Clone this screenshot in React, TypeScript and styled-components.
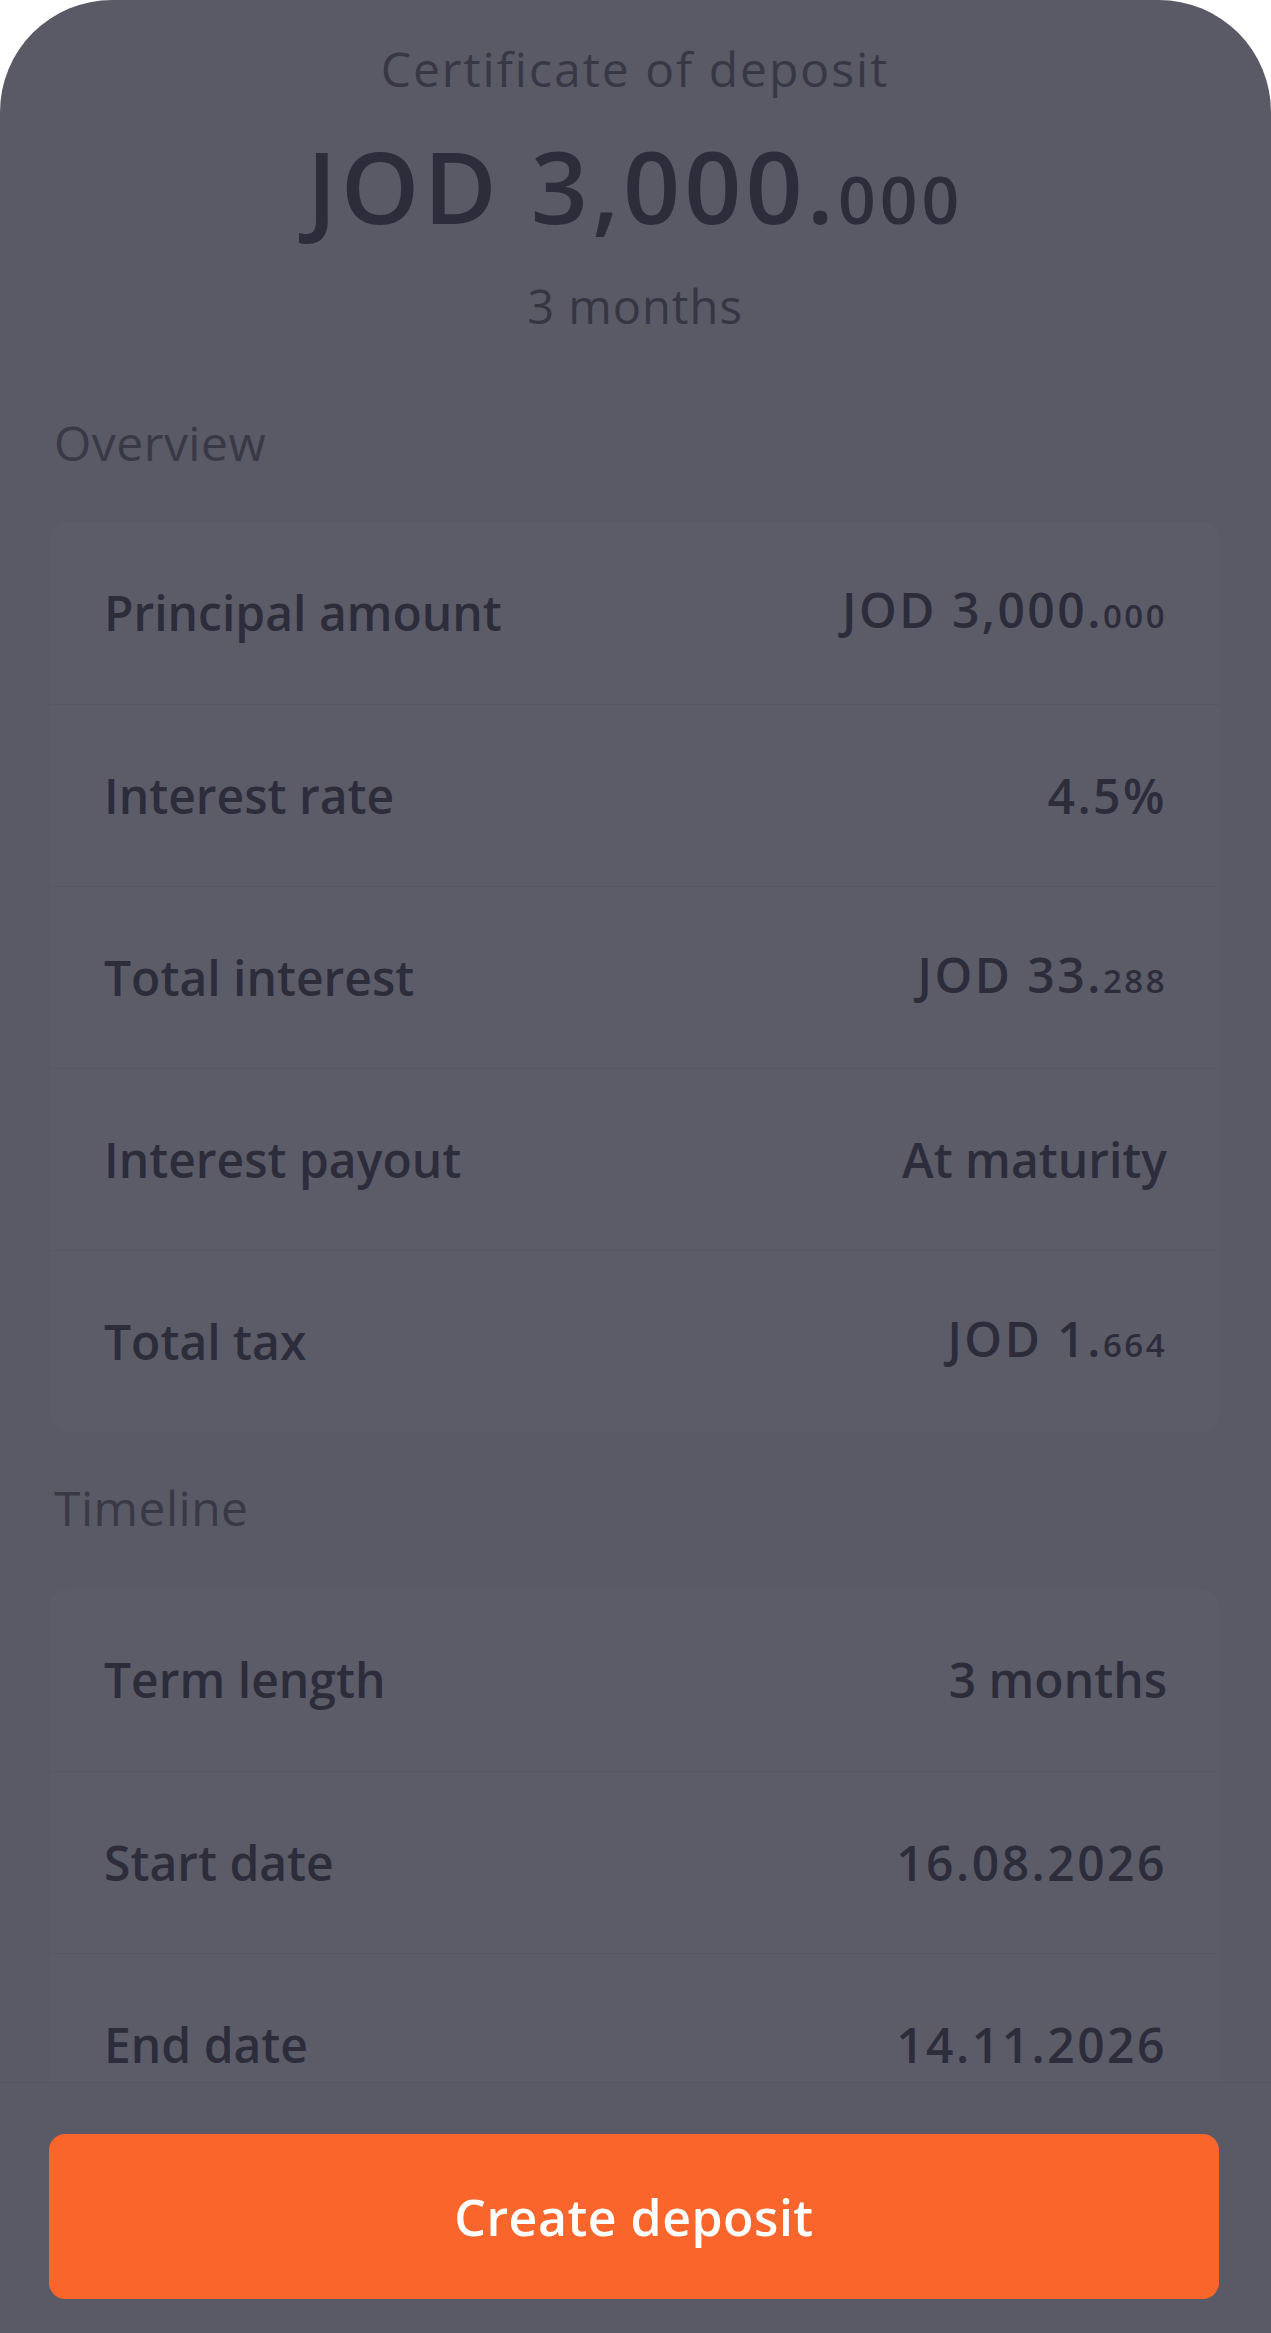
import React from "react";
import styled, { createGlobalStyle } from "styled-components";

const GlobalStyle = createGlobalStyle`
  html, body {
    margin: 0;
    padding: 0;
    background: #ffffff;
  }
  body {
    font-family: "Open Sans", "Noto Sans", sans-serif;
    -webkit-font-smoothing: antialiased;
  }
`;

interface Row {
  label: string;
  value: string;
  fraction?: string;
  numeric?: boolean;
}

const overview: Row[] = [
  { label: "Principal amount", value: "JOD 3,000.", fraction: "000", numeric: true },
  { label: "Interest rate", value: "4.5%", numeric: true },
  { label: "Total interest", value: "JOD 33.", fraction: "288", numeric: true },
  { label: "Interest payout", value: "At maturity" },
  { label: "Total tax", value: "JOD 1.", fraction: "664", numeric: true },
];

const timeline: Row[] = [
  { label: "Term length", value: "3 months" },
  { label: "Start date", value: "16.08.2026", numeric: true },
  { label: "End date", value: "14.11.2026", numeric: true },
];

const Sheet = styled.div`
  width: 1271px;
  height: 2333px;
  display: flex;
  flex-direction: column;
  background: #5a5a66;
  border-radius: 112px 112px 0 0;
  overflow: hidden;
`;

const ScrollArea = styled.main`
  flex: 1;
  overflow: hidden;
  padding: 39px 51px 0 50px;
`;

const Header = styled.header`
  display: flex;
  flex-direction: column;
  align-items: center;
  color: #2e2d3b;
`;

const Title = styled.div`
  font-size: 48px;
  line-height: 60px;
  letter-spacing: 2px;
  color: #383745;
`;

const Amount = styled.div`
  margin-top: 26px;
  font-size: 100px;
  line-height: 120px;
  font-weight: 600;
  letter-spacing: 4px;
  color: #2d2c3a;
`;

const Fraction = styled.span<{ $size: number }>`
  font-size: ${({ $size }) => $size}px;
`;

const Term = styled.div`
  margin-top: 18px;
  font-size: 47px;
  line-height: 60px;
  font-weight: 500;
  letter-spacing: 1px;
  color: #363543;
`;

const SectionLabel = styled.h2<{ $top: number }>`
  margin: ${({ $top }) => $top}px 0 0 4px;
  font-size: 48px;
  line-height: 60px;
  font-weight: 400;
  letter-spacing: 0.5px;
  color: #393846;
`;

const Card = styled.section<{ $top: number }>`
  margin-top: ${({ $top }) => $top}px;
  background: #5c5c69;
  border-radius: 18px;
`;

const RowItem = styled.div`
  box-sizing: border-box;
  height: 182px;
  display: flex;
  align-items: center;
  justify-content: space-between;
  padding: 0 53px 0 54px;
  font-size: 48px;
  line-height: 60px;
  font-weight: 600;
  color: #2d2c3a;

  & + & {
    border-top: 1px solid #585864;
  }
`;

const Value = styled.span<{ $numeric?: boolean }>`
  letter-spacing: ${({ $numeric }) => ($numeric ? "2.5px" : "0")};
`;

const Footer = styled.footer`
  border-top: 1px solid #545460;
  padding: 51px 52px 34px 49px;
`;

const Button = styled.button`
  display: block;
  width: 100%;
  height: 165px;
  border: none;
  border-radius: 16px;
  background: #f9652a;
  color: #ffffff;
  font-family: inherit;
  font-size: 50px;
  font-weight: 600;
  letter-spacing: 0.5px;
  cursor: pointer;
`;

function Rows({ rows }: { rows: Row[] }) {
  return (
    <>
      {rows.map((r) => (
        <RowItem key={r.label}>
          <span>{r.label}</span>
          <Value $numeric={r.numeric}>
            {r.value}
            {r.fraction && <Fraction $size={33}>{r.fraction}</Fraction>}
          </Value>
        </RowItem>
      ))}
    </>
  );
}

export default function App() {
  return (
    <>
      <GlobalStyle />
      <Sheet>
        <ScrollArea>
          <Header>
            <Title>Certificate of deposit</Title>
            <Amount>
              JOD 3,000.<Fraction $size={66}>000</Fraction>
            </Amount>
            <Term>3 months</Term>
          </Header>

          <SectionLabel $top={77}>Overview</SectionLabel>
          <Card $top={49}>
            <Rows rows={overview} />
          </Card>

          <SectionLabel $top={46}>Timeline</SectionLabel>
          <Card $top={51}>
            <Rows rows={timeline} />
          </Card>
        </ScrollArea>
        <Footer>
          <Button>Create deposit</Button>
        </Footer>
      </Sheet>
    </>
  );
}
